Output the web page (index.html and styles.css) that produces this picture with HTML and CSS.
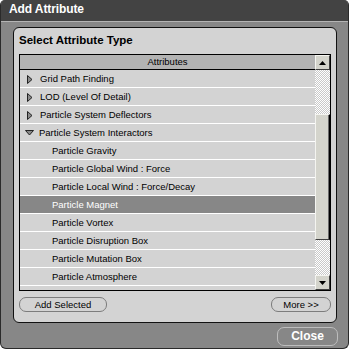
FILE: index.html
```html
<!DOCTYPE html>
<html>
<head>
    <title>Add Attribute</title>
    <link rel="stylesheet" href="styles.css">
</head>
<body>
    <div class="window">
        <div class="titlebar">Add Attribute</div>

        <div class="panel">
            <h3 class="panel-title">Select Attribute Type</h3>

            <div class="table">
                <div class="list-col">
                    <div class="list-header">Attributes</div>
                    <div class="list">
                        <div class="row parent">
                            <svg class="arrow" width="6" height="9" viewBox="0 0 6 9"><path d="M0.5 0.5 L5 4.5 L0.5 8.5 Z" fill="#8a8a8a" stroke="#222"/></svg>
                            Grid Path Finding
                        </div>
                        <div class="row parent">
                            <svg class="arrow" width="6" height="9" viewBox="0 0 6 9"><path d="M0.5 0.5 L5 4.5 L0.5 8.5 Z" fill="#8a8a8a" stroke="#222"/></svg>
                            LOD (Level Of Detail)
                        </div>
                        <div class="row parent">
                            <svg class="arrow" width="6" height="9" viewBox="0 0 6 9"><path d="M0.5 0.5 L5 4.5 L0.5 8.5 Z" fill="#8a8a8a" stroke="#222"/></svg>
                            Particle System Deflectors
                        </div>
                        <div class="row parent open">
                            <svg class="arrow" width="9" height="6" viewBox="0 0 9 6"><path d="M0.5 0.5 L8.5 0.5 L4.5 5 Z" fill="#8a8a8a" stroke="#222"/></svg>
                            Particle System Interactors
                        </div>
                        <div class="row child">Particle Gravity</div>
                        <div class="row child">Particle Global Wind : Force</div>
                        <div class="row child">Particle Local Wind : Force/Decay</div>
                        <div class="row child selected">Particle Magnet</div>
                        <div class="row child">Particle Vortex</div>
                        <div class="row child">Particle Disruption Box</div>
                        <div class="row child">Particle Mutation Box</div>
                        <div class="row child">Particle Atmosphere</div>
                    </div>
                </div>

                <div class="scrollbar">
                    <div class="scroll-btn">
                        <svg width="7" height="4" viewBox="0 0 7 4"><path d="M3.5 0 L7 4 L0 4 Z" fill="#000"/></svg>
                    </div>
                    <div class="track">
                        <div class="thumb"></div>
                    </div>
                    <div class="scroll-btn">
                        <svg width="7" height="4" viewBox="0 0 7 4"><path d="M0 0 L7 0 L3.5 4 Z" fill="#000"/></svg>
                    </div>
                </div>
            </div>

            <div class="actions">
                <button class="pill add">Add Selected</button>
                <button class="pill more">More &gt;&gt;</button>
            </div>
        </div>

        <div class="footer">
            <button class="close">Close</button>
        </div>
    </div>
</body>
</html>
```

FILE: styles.css
```css
* {
    margin: 0;
    padding: 0;
    box-sizing: border-box;
}

body {
    background: #ffffff;
    font-family: 'Liberation Sans', Arial, sans-serif;
    width: 349px;
    height: 349px;
    overflow: hidden;
}

.window {
    width: 349px;
    height: 349px;
    background: #878787;
    border: 1px solid #2a2a2a;
    border-top: none;
    border-radius: 5px 5px 6px 6px;
    overflow: hidden;
    display: flex;
    flex-direction: column;
}

.titlebar {
    height: 22px;
    background: #434343;
    border-bottom: 1px solid #b4b4b4;
    color: #ffffff;
    font-weight: bold;
    font-size: 12px;
    line-height: 19px;
    padding-left: 8px;
    letter-spacing: -0.1px;
}

/* Inner rounded panel */
.panel {
    margin: 5px 11px 0 12px;
    height: 296px;
    background: #d3d3d3;
    border: 1px solid #111111;
    border-radius: 6px;
    padding: 5px 5px 0 5px;
}

.panel-title {
    font-size: 11.5px;
    line-height: 14px;
    height: 14px;
    margin-bottom: 7px;
    color: #000;
}

.table {
    display: flex;
    height: 237px;
    border: 1px solid #000;
}

.list-col {
    flex: 1;
    display: flex;
    flex-direction: column;
    min-width: 0;
}

.list-header {
    height: 15px;
    background: #b3b3b3;
    border-bottom: 1px solid #000;
    text-align: center;
    font-size: 9.5px;
    line-height: 14px;
    color: #000;
}

.list {
    flex: 1;
    overflow: hidden;
}

.row {
    height: 18px;
    border-bottom: 1px solid #ffffff;
    font-size: 9.5px;
    line-height: 16px;
    padding-top: 1px;
    color: #000;
    white-space: nowrap;
    display: flex;
    align-items: center;
}

.row.parent {
    padding-left: 6px;
}

.row.parent .arrow {
    margin-right: 7px;
    margin-left: 1px;
}

.row.parent.open .arrow {
    margin-left: -1px;
    margin-right: 5px;
}

.row.child {
    padding-left: 32px;
}

.row.selected {
    background: #878787;
    color: #ffffff;
}

/* Scrollbar column */
.scrollbar {
    width: 15px;
    display: flex;
    flex-direction: column;
}

.scroll-btn {
    height: 15px;
    background: #d4d4cc;
    border: 1px solid;
    border-color: #f4f4f0 #404040 #404040 #f4f4f0;
    display: flex;
    align-items: center;
    justify-content: center;
}

.track {
    flex: 1;
    background: repeating-conic-gradient(#ffffff 0 25%, #c9c9c9 0 50%) 0 0 / 2px 2px;
}

.thumb {
    margin-top: 44px;
    height: 126px;
    background: #d4d4cc;
    border: 1px solid;
    border-color: #f4f4f0 #000 #404040 #f4f4f0;
    box-shadow: inset -1px 0 0 #6a6a6a;
}

.actions {
    display: flex;
    justify-content: space-between;
    margin-top: 6px;
}

.pill {
    height: 15px;
    background: #d3d3d3;
    border: 1px solid #7c7c7c;
    border-radius: 7px;
    font-family: 'Liberation Sans', Arial, sans-serif;
    font-size: 9.5px;
    line-height: 13px;
    color: #000;
}

.pill.add {
    width: 88px;
}

.pill.more {
    width: 60px;
}

.footer {
    display: flex;
    justify-content: flex-end;
    padding: 4px 10px 0 0;
}

.close {
    width: 61px;
    height: 19px;
    background: #878787;
    border: 1px solid #bdbdbd;
    border-radius: 7px;
    color: #ffffff;
    font-family: 'Liberation Sans', Arial, sans-serif;
    font-weight: bold;
    font-size: 12px;
    line-height: 17px;
}
```
